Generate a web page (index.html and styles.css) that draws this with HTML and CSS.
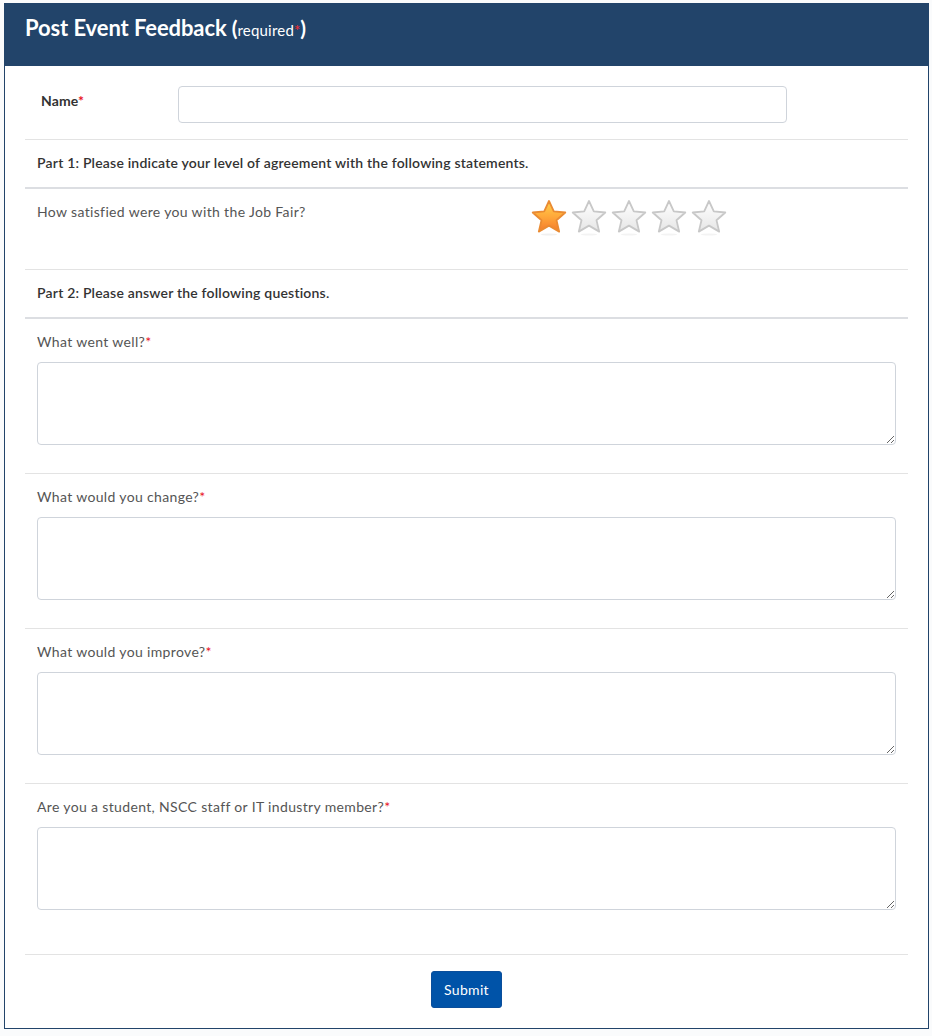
FILE: index.html
```html
<!DOCTYPE html>
<html lang="en">
<head>
<meta charset="utf-8">
<title>Post Event Feedback</title>
<link rel="stylesheet" href="styles.css">
</head>
<body>
<div class="panel">
  <div class="panel-head">
    <h1 class="title">Post Event Feedback <span class="paren">(</span><span class="req-note">required</span><span class="star-req">*</span><span class="paren">)</span></h1>
  </div>
  <form class="panel-body">
    <div class="name-row">
      <label class="name-label">Name<span class="ast">*</span></label>
      <input class="name-input" type="text">
    </div>
    <div class="section-head">Part 1: Please indicate your level of agreement with the following statements.</div>
    <div class="rating-row">
      <span class="q-text">How satisfied were you with the Job Fair?</span>
      <div class="stars">
        <svg class="star" viewBox="0 0 38 38" width="38" height="38">
          <defs>
            <linearGradient id="gOn" x1="0" y1="0" x2="0" y2="1">
              <stop offset="0" stop-color="#ffd24c"/>
              <stop offset="0.5" stop-color="#ffa93a"/>
              <stop offset="1" stop-color="#f47a2c"/>
            </linearGradient>
            <linearGradient id="gOff" x1="0" y1="0" x2="0" y2="1">
              <stop offset="0" stop-color="#ffffff"/>
              <stop offset="1" stop-color="#e6e6e6"/>
            </linearGradient>
          </defs>
          <ellipse cx="19" cy="35.5" rx="8" ry="1" fill="#f0f0f0"/>
          <path d="M19 2 L23.8 12.4 L35.3 13.5 L26.5 21.2 L29.2 32.6 L19 26.6 L8.8 32.6 L11.5 21.2 L2.7 13.5 L14.2 12.4 Z" fill="url(#gOn)" stroke="#ea8b32" stroke-width="1.8" stroke-linejoin="round"/>
        </svg>
        <svg class="star" viewBox="0 0 38 38" width="38" height="38"><ellipse cx="19" cy="35.5" rx="8" ry="1" fill="#f3f3f3"/><path d="M19 2 L23.8 12.4 L35.3 13.5 L26.5 21.2 L29.2 32.6 L19 26.6 L8.8 32.6 L11.5 21.2 L2.7 13.5 L14.2 12.4 Z" fill="url(#gOff)" stroke="#c8c8c8" stroke-width="1.8" stroke-linejoin="round"/></svg>
        <svg class="star" viewBox="0 0 38 38" width="38" height="38"><ellipse cx="19" cy="35.5" rx="8" ry="1" fill="#f3f3f3"/><path d="M19 2 L23.8 12.4 L35.3 13.5 L26.5 21.2 L29.2 32.6 L19 26.6 L8.8 32.6 L11.5 21.2 L2.7 13.5 L14.2 12.4 Z" fill="url(#gOff)" stroke="#c8c8c8" stroke-width="1.8" stroke-linejoin="round"/></svg>
        <svg class="star" viewBox="0 0 38 38" width="38" height="38"><ellipse cx="19" cy="35.5" rx="8" ry="1" fill="#f3f3f3"/><path d="M19 2 L23.8 12.4 L35.3 13.5 L26.5 21.2 L29.2 32.6 L19 26.6 L8.8 32.6 L11.5 21.2 L2.7 13.5 L14.2 12.4 Z" fill="url(#gOff)" stroke="#c8c8c8" stroke-width="1.8" stroke-linejoin="round"/></svg>
        <svg class="star" viewBox="0 0 38 38" width="38" height="38"><ellipse cx="19" cy="35.5" rx="8" ry="1" fill="#f3f3f3"/><path d="M19 2 L23.8 12.4 L35.3 13.5 L26.5 21.2 L29.2 32.6 L19 26.6 L8.8 32.6 L11.5 21.2 L2.7 13.5 L14.2 12.4 Z" fill="url(#gOff)" stroke="#c8c8c8" stroke-width="1.8" stroke-linejoin="round"/></svg>
      </div>
    </div>
    <div class="section-head">Part 2: Please answer the following questions.</div>
    <div class="q-block">
      <label class="q-text">What went well?<span class="ast">*</span></label>
      <textarea class="answer"></textarea>
    </div>
    <div class="q-block">
      <label class="q-text">What would you change?<span class="ast">*</span></label>
      <textarea class="answer"></textarea>
    </div>
    <div class="q-block">
      <label class="q-text">What would you improve?<span class="ast">*</span></label>
      <textarea class="answer"></textarea>
    </div>
    <div class="q-block last">
      <label class="q-text">Are you a student, NSCC staff or IT industry member?<span class="ast">*</span></label>
      <textarea class="answer"></textarea>
    </div>
    <div class="actions">
      <button class="submit" type="button">Submit</button>
    </div>
  </form>
</div>
</body>
</html>
```

FILE: styles.css
```css
* { box-sizing: border-box; }

html, body {
  background: #fafbfc;
}

body {
  margin: 3px 3px 0 4px;
  font-family: Lato, "Noto Sans", sans-serif;
  color: #333;
}

.panel {
  width: 925px;
  height: 1026px;
  border: 1px solid #22446a;
  background: #fff;
  display: flex;
  flex-direction: column;
}

.panel-head {
  background: #22446a;
  height: 62px;
  padding: 11px 20px 0;
}

.title {
  margin: 0;
  color: #fff;
  font-size: 22px;
  font-weight: 700;
  line-height: 26px;
  letter-spacing: -0.1px;
}

.paren { font-size: 21px; }

.req-note {
  font-size: 15px;
  font-weight: 400;
  letter-spacing: 0.2px;
}

.star-req {
  color: #ff2a2a;
  font-size: 15px;
  font-weight: 400;
}

.panel-body {
  padding: 20px 20px 0;
  display: flex;
  flex-direction: column;
}

.ast { color: #e8121c; }

.name-row {
  display: flex;
  align-items: flex-start;
  padding: 0 0 16px 16px;
  border-bottom: 1px solid #e3e3e3;
}

.name-label {
  width: 137px;
  font-size: 14px;
  font-weight: 700;
  line-height: 18px;
  padding-top: 6px;
  color: #333;
  letter-spacing: 0.1px;
}

.name-input {
  width: 609px;
  height: 37px;
  border: 1px solid #cfd4db;
  border-radius: 4px;
  background: #fff;
}

.section-head {
  padding: 14px 12px 15px;
  font-size: 14px;
  font-weight: 600;
  line-height: 18px;
  color: #333;
  letter-spacing: 0.2px;
  border-bottom: 2px solid #dcdee2;
}

.q-text {
  font-size: 14px;
  line-height: 18px;
  color: #555;
  letter-spacing: 0.35px;
}

.rating-row {
  display: flex;
  align-items: flex-start;
  padding: 14px 12px 32px;
  border-bottom: 1px solid #e3e3e3;
}

.rating-row .q-text {
  width: 493px;
}

.stars {
  display: flex;
  gap: 2px;
  margin-top: -4px;
}

.star { display: block; }

.q-block {
  display: flex;
  flex-direction: column;
  padding: 14px 12px 28px;
  border-bottom: 1px solid #e3e3e3;
}

.q-block .q-text { margin-bottom: 11px; }

.q-block.last { padding-bottom: 44px; }

.answer {
  width: 859px;
  height: 83px;
  border: 1px solid #cfd4db;
  border-radius: 4px;
  resize: vertical;
  background: #fff;
}

.actions {
  display: flex;
  justify-content: center;
  padding-top: 16px;
}

.submit {
  width: 71px;
  height: 37px;
  border: 1px solid #0a4e9b;
  border-radius: 3px;
  background: #0053a8;
  color: #fff;
  font-family: Lato, "Noto Sans", sans-serif;
  font-size: 14px;
  letter-spacing: 0.3px;
  cursor: pointer;
}
```
